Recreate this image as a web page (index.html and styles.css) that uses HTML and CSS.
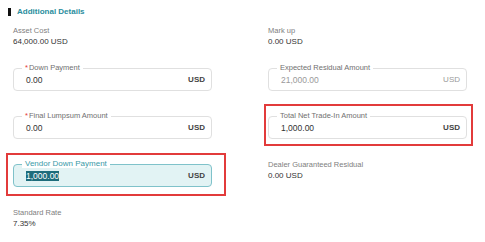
FILE: index.html
```html
<!DOCTYPE html>
<html lang="en">
<head>
    <meta charset="UTF-8">
    <title>Additional Details</title>
    <link rel="stylesheet" href="styles.css">
</head>
<body>
    <div class="section-title"><span class="bar"></span>Additional Details</div>
    <div class="details">
        <div class="info">
            <div class="info-label">Asset Cost</div>
            <div class="info-value">64,000.00 USD</div>
        </div>
        <div class="info">
            <div class="info-label">Mark up</div>
            <div class="info-value">0.00 USD</div>
        </div>

        <div class="field">
            <div class="box">
                <label class="box-label"><span class="req">*</span>Down Payment</label>
                <span class="value">0.00</span>
                <span class="unit">USD</span>
            </div>
        </div>
        <div class="field disabled">
            <div class="box">
                <label class="box-label">Expected Residual Amount</label>
                <span class="value">21,000.00</span>
                <span class="unit">USD</span>
            </div>
        </div>

        <div class="field">
            <div class="box">
                <label class="box-label"><span class="req">*</span>Final Lumpsum Amount</label>
                <span class="value">0.00</span>
                <span class="unit">USD</span>
            </div>
        </div>
        <div class="field marked marked-right">
            <div class="box">
                <label class="box-label">Total Net Trade-In Amount</label>
                <span class="value">1,000.00</span>
                <span class="unit">USD</span>
            </div>
        </div>

        <div class="field focused marked marked-left">
            <div class="box">
                <label class="box-label">Vendor Down Payment</label>
                <span class="value"><span class="selected-text">1,000.00</span></span>
                <span class="unit">USD</span>
            </div>
        </div>
        <div class="info">
            <div class="info-label">Dealer Guaranteed Residual</div>
            <div class="info-value">0.00 USD</div>
        </div>

        <div class="info">
            <div class="info-label">Standard Rate</div>
            <div class="info-value">7.35%</div>
        </div>
    </div>
</body>
</html>
```

FILE: styles.css
```css
body {
    margin: 0;
    background-color: #fff;
    font-family: "Liberation Sans", Arial, sans-serif;
    color: #333;
}
.section-title {
    display: flex;
    align-items: center;
    margin: 6px 0 0 8px;
    height: 11px;
    font-size: 8px;
    font-weight: bold;
    color: #2a8d9d;
}
.section-title .bar {
    width: 3px;
    height: 8px;
    background-color: #111;
    margin-right: 6px;
}
.details {
    display: grid;
    grid-template-columns: 199px 199px;
    column-gap: 56px;
    row-gap: 16px;
    margin: 8px 0 0 13px;
}
.info-label {
    font-size: 7.5px;
    line-height: 11px;
    color: #808080;
}
.info-value {
    font-size: 8px;
    line-height: 11px;
    color: #333;
}
.field {
    padding: 5px 0 4px;
}
.box {
    position: relative; /* label sits on the border */
    display: flex;
    align-items: center;
    height: 23px;
    box-sizing: border-box;
    padding: 0 6px 0 12px;
    border: 1px solid #e0e0e0;
    border-radius: 4px;
    background-color: #fff;
}
.box-label {
    position: absolute;
    top: -6px;
    left: 8px;
    padding: 0 3px;
    font-size: 7.5px;
    line-height: 9px;
    color: #707070;
    background-color: #fff;
}
.req {
    color: #e53935;
    margin-right: 1px;
}
.value {
    flex: 1;
    font-size: 8.5px;
    color: #333;
}
.unit {
    font-size: 8px;
    font-weight: bold;
    color: #444;
}
.disabled .value,
.disabled .unit {
    color: #9a9a9a;
    font-weight: normal;
}
.focused .box {
    background-color: #e2f3f4;
    border-color: #7fc2ca;
}
.focused .box-label {
    color: #3a9aa8;
    font-size: 8px;
}
.selected-text {
    background-color: #1d6c7b;
    color: #fff;
}
/* review annotations */
.marked {
    position: relative;
}
.marked::after {
    content: "";
    position: absolute;
    border: 2px solid #e23b3b;
}
.marked-right::after {
    top: -7px;
    left: -4px;
    right: -6px;
    bottom: -3px;
}
.marked-left::after {
    top: -6px;
    left: -7px;
    right: -14px;
    bottom: -5px;
}
```
